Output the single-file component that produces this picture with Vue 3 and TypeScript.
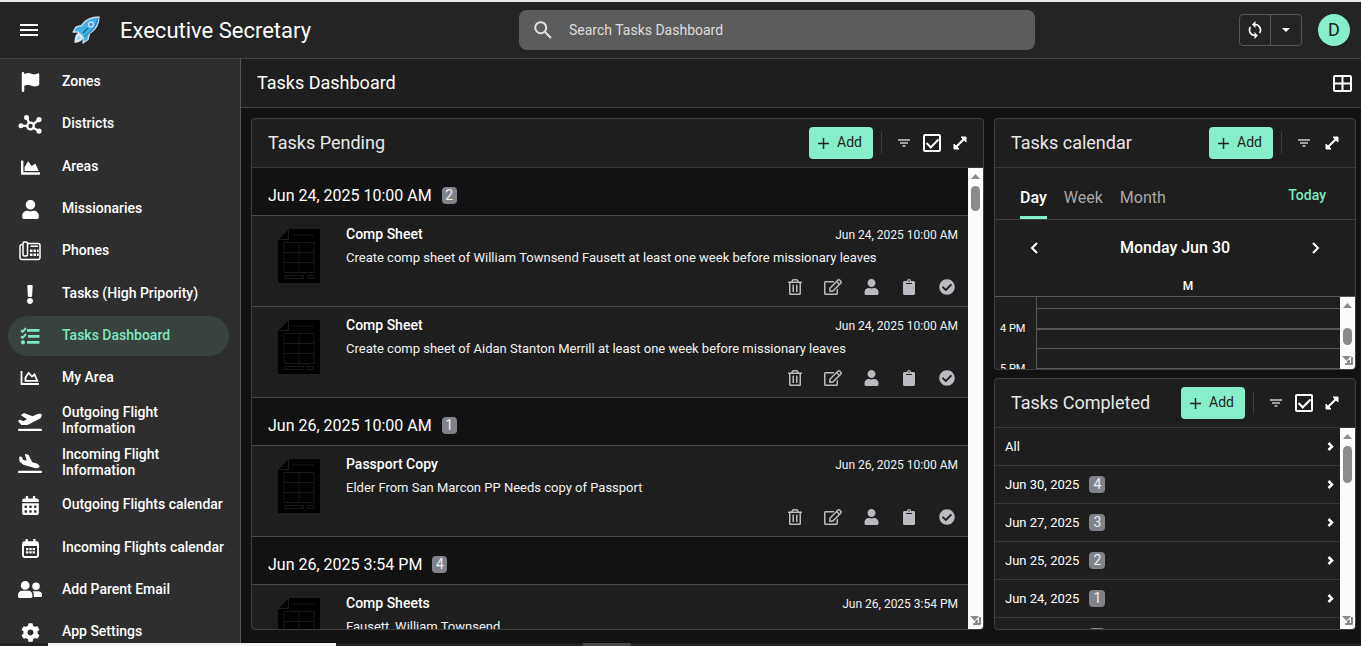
<script setup lang="ts">
import { ref } from 'vue'

interface Glyph {
  box: string
  w: number
  h: number
  fill?: string
  line?: string
  lineWidth?: number
}

const glyphs: Record<string, Glyph> = {
  flag: { box: '0 0 448 512', w: 19, h: 20, fill: 'M64 32C64 14.3 49.7 0 32 0S0 14.3 0 32V64 368 480c0 17.7 14.3 32 32 32s32-14.3 32-32V352l64.3-16.1c41.1-10.3 84.6-5.5 122.5 13.4c44.2 22.1 95.5 24.8 141.7 7.4l34.7-13c12.5-4.7 20.8-16.6 20.8-30V66.1c0-23-24.2-38-44.8-27.7l-9.6 4.8c-46.3 23.2-100.8 23.2-147.1 0c-35.1-17.6-75.4-22-113.5-12.5L64 48V32z' },
  network: { box: '0 0 24 20', w: 24, h: 20, fill: 'M3 9.300a2.500 2.500 0 1 0 0 5 2.500 2.500 0 0 0 0-5zM8.500 1a2.500 2.500 0 1 0 0 5 2.500 2.500 0 0 0 0-5zM21 3a2.600 2.600 0 1 0 0 5.200A2.600 2.600 0 0 0 21 3zM21 14.500a2.600 2.600 0 1 0 0 5.200 2.600 2.600 0 0 0 0-5.200z', line: 'M3 11.800H9M8.500 3.500L11 8.500M21 5.600L15.500 10M21 17L15.500 14M12.500 8.700a3.300 3.300 0 1 0 0 6.600 3.300 3.300 0 0 0 0-6.600z', lineWidth: 2.3 },
  area: { box: '0 0 512 512', w: 19, h: 19, fill: 'M500 384c6.600 0 12 5.400 12 12v40c0 6.600-5.400 12-12 12H12c-6.600 0-12-5.400-12-12V76c0-6.600 5.400-12 12-12h40c6.600 0 12 5.400 12 12v308h436zM372.700 159.500L288 216l-85.300-113.700c-5.100-6.800-15.500-6.300-19.900 1L96 248v104h384l-89.900-187.800c-3.200-6.500-11.400-8.700-17.400-4.700z' },
  user: { box: '0 0 448 512', w: 17, h: 19, fill: 'M224 256c70.700 0 128-57.300 128-128S294.700 0 224 0 96 57.300 96 128s57.300 128 128 128zm89.600 32h-16.700c-22.200 10.200-46.900 16-72.900 16s-50.600-5.800-72.900-16h-16.700C60.200 288 0 348.200 0 422.400V464c0 26.500 21.500 48 48 48h352c26.500 0 48-21.500 48-48v-41.600c0-74.200-60.200-134.400-134.400-134.400z' },
  phone: { box: '0 0 22 20', w: 22, h: 20, fill: 'M11 8.500h2.500V11H11zM14.500 8.500H17V11h-2.500zM18 8.500h1.700V11H18zM11 12.500h2.500V15H11zM14.500 12.500H17V15h-2.500zM18 12.500h1.700V15H18z', line: 'M8.500 2.500H19a2 2 0 0 1 2 2v12a2 2 0 0 1-2 2H3a2 2 0 0 1-2-2V5.500a2 2 0 0 1 2-2M5.500 1H7a1.500 1.500 0 0 1 1.500 1.500v11A1.500 1.500 0 0 1 7 15H5.500A1.500 1.500 0 0 1 4 13.500v-11A1.500 1.500 0 0 1 5.500 1zM11.500 5.300h7.500', lineWidth: 1.5 },
  alert: { box: '0 0 192 512', w: 8, h: 19, fill: 'M176 432c0 44.112-35.888 80-80 80s-80-35.888-80-80 35.888-80 80-80 80 35.888 80 80zM25.260 25.199l13.600 272C39.499 309.972 50.041 320 62.830 320h66.340c12.789 0 23.331-10.028 23.970-22.801l13.600-272C167.425 11.490 156.496 0 142.770 0H49.230C35.504 0 24.575 11.490 25.260 25.199z' },
  tasks: { box: '0 0 20 18', w: 20, h: 18, fill: 'M7 2h12.500v2.800H7zM8 8h11.500v2.800H8zM7 14h12.500v2.800H7zM3 13.200a2.100 2.100 0 1 0 0 4.200 2.100 2.100 0 0 0 0-4.200z', line: 'M1 3.300l1.600 1.600L6 1M1 9.300l1.600 1.600L6 7', lineWidth: 2 },
  areaLine: { box: '0 0 20 16', w: 20, h: 16, line: 'M1.500 1v13H19M5.500 10.800V7.500L8.500 3l3.500 3.500L14.500 4.500l2.800 6.300z', lineWidth: 1.8 },
  departure: { box: '0 0 640 512', w: 24, h: 19, fill: 'M624 448H16c-8.840 0-16 7.160-16 16v32c0 8.840 7.160 16 16 16h608c8.840 0 16-7.160 16-16v-32c0-8.840-7.160-16-16-16zM80.550 341.270c6.280 6.840 15.100 10.720 24.330 10.710l130.540-.180a65.620 65.620 0 0 0 29.640-7.120l290.960-147.650c26.740-13.570 50.710-32.940 67.020-58.310 18.310-28.480 20.300-49.090 13.070-63.650-7.210-14.570-24.740-25.270-58.250-27.450-29.850-1.940-59.540 5.920-86.280 19.480l-98.510 49.990-218.700-82.060a17.799 17.799 0 0 0-18-1.110L90.620 67.290c-10.670 5.410-13.250 19.650-5.170 28.530l156.220 98.100-103.210 52.380-72.350-36.470a17.804 17.804 0 0 0-16.070.020L9.910 230.220c-10.440 5.300-13.190 19.120-5.570 28.080l76.210 82.970z' },
  arrival: { box: '0 0 640 512', w: 24, h: 19, fill: 'M624 448H16c-8.840 0-16 7.160-16 16v32c0 8.840 7.160 16 16 16h608c8.840 0 16-7.160 16-16v-32c0-8.840-7.160-16-16-16zM44.810 205.660l88.740 80a62.607 62.607 0 0 0 25.470 13.930l287.600 78.350c26.480 7.210 54.560 8.720 81 1.360 29.670-8.270 43.440-21.210 47.250-35.710 3.830-14.500-1.730-32.710-23.370-54.960-19.280-19.820-44.350-32.790-70.830-40l-97.510-26.560L282.800 30.220c-1.510-5.810-5.950-10.350-11.660-11.910L206.050.580c-10.560-2.880-20.900 5.320-20.710 16.440l47.920 164.210-102.200-27.840-27.590-67.880c-1.930-4.890-6.010-8.570-11.020-9.930L52.720 64.750c-10.340-2.820-20.530 5-20.720 15.880l.230 101.780c.190 8.910 6.030 17.340 12.580 23.250z' },
  calendar: { box: '0 0 448 512', w: 17, h: 19, fill: 'M0 464c0 26.500 21.500 48 48 48h352c26.500 0 48-21.500 48-48V192H0v272zm320-196c0-6.600 5.400-12 12-12h40c6.600 0 12 5.400 12 12v40c0 6.600-5.400 12-12 12h-40c-6.600 0-12-5.400-12-12v-40zm0 128c0-6.600 5.400-12 12-12h40c6.600 0 12 5.400 12 12v40c0 6.600-5.400 12-12 12h-40c-6.600 0-12-5.400-12-12v-40zM192 268c0-6.600 5.400-12 12-12h40c6.600 0 12 5.400 12 12v40c0 6.600-5.400 12-12 12h-40c-6.600 0-12-5.400-12-12v-40zm0 128c0-6.600 5.400-12 12-12h40c6.600 0 12 5.400 12 12v40c0 6.600-5.400 12-12 12h-40c-6.600 0-12-5.400-12-12v-40zM64 268c0-6.600 5.400-12 12-12h40c6.600 0 12 5.400 12 12v40c0 6.600-5.400 12-12 12H76c-6.600 0-12-5.400-12-12v-40zm0 128c0-6.600 5.400-12 12-12h40c6.600 0 12 5.400 12 12v40c0 6.600-5.400 12-12 12H76c-6.600 0-12-5.400-12-12v-40zM400 64h-48V16c0-8.800-7.200-16-16-16h-32c-8.800 0-16 7.200-16 16v48H160V16c0-8.800-7.200-16-16-16h-32c-8.800 0-16 7.200-16 16v48H48C21.500 64 0 85.500 0 112v48h448v-48c0-26.500-21.500-48-48-48z' },
  calendarLine: { box: '0 0 17 19', w: 17, h: 19, fill: 'M3.500 0h2.300v3H3.500zM11.200 0h2.300v3h-2.300zM1 2.500h15V7H1zM4 9h2.400v2.200H4zM7.300 9h2.400v2.200H7.300zM10.600 9H13v2.200h-2.400zM4 12.200h2.400v2.200H4zM7.300 12.200h2.400v2.200H7.300zM10.600 12.200H13v2.200h-2.400z', line: 'M2.500 3.500h12a1.500 1.500 0 0 1 1.500 1.500v11.500a1.500 1.500 0 0 1-1.500 1.500h-12A1.500 1.500 0 0 1 1 16.500V5a1.500 1.500 0 0 1 1.500-1.500z', lineWidth: 1.9 },
  users: { box: '0 0 24 18', w: 24, h: 18, fill: 'M7.200 0a4.400 4.400 0 1 0 0 8.800 4.400 4.400 0 0 0 0-8.800zM4 9.800h6.400c2.400 0 4 1.800 4 4v1.800c0 .9-.6 1.400-1.400 1.400H1.400C.6 17 0 16.500 0 15.600v-1.800c0-2.200 1.600-4 4-4zM18 1.500a3.800 3.800 0 1 0 0 7.600 3.800 3.800 0 0 0 0-7.600zM15 10.200h5.500c2 0 3.500 1.500 3.500 3.300v1.200c0 .8-.6 1.300-1.300 1.300h-6.900v-2.200c0-1.500-.4-2.600-1.300-3.500z' },
  gear: { box: '0 0 512 512', w: 19, h: 19, fill: 'M487.400 315.700l-42.600-24.600c4.300-23.200 4.300-47 0-70.200l42.600-24.600c4.900-2.800 7.100-8.600 5.500-14-11.100-35.600-30-67.800-54.700-94.600-3.800-4.100-10-5.100-14.800-2.300L380.800 110c-17.900-15.400-38.500-27.300-60.800-35.100V25.800c0-5.600-3.900-10.500-9.400-11.700-36.700-8.200-74.300-7.800-109.200 0-5.500 1.200-9.400 6.100-9.400 11.700V75c-22.200 7.900-42.800 19.800-60.800 35.100L88.700 85.500c-4.900-2.800-11-1.900-14.800 2.300-24.700 26.700-43.600 58.900-54.700 94.600-1.700 5.400.6 11.200 5.500 14L67.300 221c-4.300 23.200-4.300 47 0 70.200l-42.600 24.600c-4.900 2.800-7.100 8.600-5.500 14 11.100 35.600 30 67.800 54.700 94.600 3.800 4.100 10 5.100 14.800 2.300l42.600-24.600c17.900 15.400 38.500 27.300 60.800 35.100v49.200c0 5.600 3.900 10.500 9.400 11.700 36.700 8.200 74.300 7.800 109.200 0 5.500-1.200 9.400-6.100 9.400-11.700v-49.200c22.200-7.900 42.800-19.800 60.800-35.100l42.600 24.600c4.900 2.800 11 1.900 14.800-2.300 24.700-26.700 43.600-58.900 54.700-94.600 1.500-5.500-.7-11.300-5.600-14.100zM256 336c-44.100 0-80-35.900-80-80s35.900-80 80-80 80 35.900 80 80-35.900 80-80 80z' },
  trash: { box: '0 0 448 512', w: 14, h: 16, fill: 'M268 416h24a12 12 0 0 0 12-12V188a12 12 0 0 0-12-12h-24a12 12 0 0 0-12 12v216a12 12 0 0 0 12 12zM432 80h-82.410l-34-56.700A48 48 0 0 0 274.410 0H173.590a48 48 0 0 0-41.160 23.300L98.410 80H16A16 16 0 0 0 0 96v16a16 16 0 0 0 16 16h16v336a48 48 0 0 0 48 48h288a48 48 0 0 0 48-48V128h16a16 16 0 0 0 16-16V96a16 16 0 0 0-16-16zM171.840 50.910A6 6 0 0 1 177 48h94a6 6 0 0 1 5.150 2.910L293.610 80H154.390zM368 464H80V128h288zm-212-48h24a12 12 0 0 0 12-12V188a12 12 0 0 0-12-12h-24a12 12 0 0 0-12 12v216a12 12 0 0 0 12 12z' },
  edit: { box: '0 0 576 512', w: 18, h: 16, fill: 'M402.300 344.900l32-32c5-5 13.700-1.500 13.700 5.700V464c0 26.500-21.500 48-48 48H48c-26.500 0-48-21.500-48-48V112c0-26.500 21.500-48 48-48h273.500c7.100 0 10.700 8.600 5.700 13.700l-32 32c-1.500 1.500-3.500 2.300-5.700 2.300H48v352h352V350.500c0-2.100.8-4.100 2.300-5.600zm156.600-201.800L296.300 405.700l-90.400 10c-26.200 2.900-48.500-19.200-45.600-45.600l10-90.400L432.900 17.100c22.900-22.900 59.900-22.900 82.700 0l43.200 43.200c22.900 22.900 22.900 60 .1 82.800zM460.100 174L402 115.900 216.200 301.800l-7.300 65.300 65.300-7.300L460.100 174zm64.800-79.700l-43.200-43.200c-4.100-4.100-10.800-4.100-14.800 0L436 82l58.100 58.100 30.900-30.900c4-4.200 4-10.800-.1-14.900z' },
  person: { box: '0 0 448 512', w: 15, h: 16, fill: 'M224 256c70.700 0 128-57.300 128-128S294.700 0 224 0 96 57.300 96 128s57.300 128 128 128zm89.600 32h-16.700c-22.200 10.200-46.900 16-72.900 16s-50.600-5.800-72.900-16h-16.700C60.200 288 0 348.200 0 422.400V464c0 26.500 21.500 48 48 48h352c26.500 0 48-21.500 48-48v-41.600c0-74.200-60.200-134.400-134.400-134.400z' },
  clipboard: { box: '0 0 384 512', w: 12, h: 16, fill: 'M384 112v352c0 26.510-21.490 48-48 48H48c-26.510 0-48-21.490-48-48V112c0-26.510 21.490-48 48-48h80c0-35.290 28.710-64 64-64s64 28.710 64 64h80c26.510 0 48 21.490 48 48zM192 40c-13.255 0-24 10.745-24 24s10.745 24 24 24 24-10.745 24-24-10.745-24-24-24m96 114v-20a6 6 0 0 0-6-6H102a6 6 0 0 0-6 6v20a6 6 0 0 0 6 6h180a6 6 0 0 0 6-6z' },
  done: { box: '0 0 512 512', w: 16, h: 16, fill: 'M504 256c0 136.967-111.033 248-248 248S8 392.967 8 256 119.033 8 256 8s248 111.033 248 248zM227.314 387.314l184-184c6.248-6.248 6.248-16.379 0-22.627l-22.627-22.627c-6.248-6.249-16.379-6.249-22.628 0L216 308.118l-70.059-70.059c-6.248-6.248-16.379-6.248-22.628 0l-22.627 22.627c-6.248 6.248-6.248 16.379 0 22.627l104 104c6.249 6.249 16.379 6.249 22.628.001z' },
}

const nav = [
  { label: 'Zones', icon: 'flag' },
  { label: 'Districts', icon: 'network' },
  { label: 'Areas', icon: 'area' },
  { label: 'Missionaries', icon: 'user' },
  { label: 'Phones', icon: 'phone' },
  { label: 'Tasks (High Pripority)', icon: 'alert' },
  { label: 'Tasks Dashboard', icon: 'tasks' },
  { label: 'My Area', icon: 'areaLine' },
  { label: 'Outgoing Flight Information', icon: 'departure' },
  { label: 'Incoming Flight Information', icon: 'arrival' },
  { label: 'Outgoing Flights calendar', icon: 'calendar' },
  { label: 'Incoming Flights calendar', icon: 'calendarLine' },
  { label: 'Add Parent Email', icon: 'users' },
  { label: 'App Settings', icon: 'gear' },
]
const current = ref('Tasks Dashboard')

const groups = [
  {
    date: 'Jun 24, 2025 10:00 AM',
    count: 2,
    tasks: [
      { title: 'Comp Sheet', text: 'Create comp sheet of William Townsend Fausett at least one week before missionary leaves' },
      { title: 'Comp Sheet', text: 'Create comp sheet of Aidan Stanton Merrill at least one week before missionary leaves' },
    ],
  },
  {
    date: 'Jun 26, 2025 10:00 AM',
    count: 1,
    tasks: [{ title: 'Passport Copy', text: 'Elder From San Marcon PP Needs copy of Passport' }],
  },
  {
    date: 'Jun 26, 2025 3:54 PM',
    count: 4,
    tasks: [{ title: 'Comp Sheets', text: 'Fausett, William Townsend' }],
  },
]

const actions = [
  { icon: 'trash', label: 'Delete' },
  { icon: 'edit', label: 'Edit' },
  { icon: 'person', label: 'Assign' },
  { icon: 'clipboard', label: 'Copy' },
  { icon: 'done', label: 'Complete' },
]

const completed = [
  { label: 'All', count: 0 },
  { label: 'Jun 30, 2025', count: 4 },
  { label: 'Jun 27, 2025', count: 3 },
  { label: 'Jun 25, 2025', count: 2 },
  { label: 'Jun 24, 2025', count: 1 },
  { label: 'Jun 23, 2025', count: 5 },
]

const views = ['Day', 'Week', 'Month']
const view = ref('Day')
const search = ref('')
const selectPending = ref(true)
const selectCompleted = ref(true)
</script>

<template>
  <div class="app">
    <div class="window-edge"></div>
    <header class="topbar">
      <div class="brand">
        <button class="icon-btn menu" type="button" aria-label="Menu"><span></span><span></span><span></span></button>
        <svg class="rocket" viewBox="0 0 28 28" aria-hidden="true">
          <path d="M27 1C19 1 13 4 9.500 9.500L4 11 1 16l5 0 5.500 5.500L11 27l5-3.500 1.500-6C23 14 27 8 27 1z" fill="#3fb1e5" stroke="#c9d7e6" stroke-width="1.400" stroke-linejoin="round" />
          <path d="M6.500 16.500l5 5c-1 3-4 5-9 5.500C2.500 22 3.500 18 6.500 16.500z" fill="#dceaf5" />
          <path d="M6.500 19.500l2.500 2.500c-1 1.500-2.500 2-4 2 0-1.500.5-3.500 1.500-4.500z" fill="#8fd0f0" />
          <path d="M26 2c-2 9-6 14-14.500 19" fill="none" stroke="#2585bd" stroke-width="1.200" />
          <path d="M11 17l5-5" stroke="#1f5d92" stroke-width="1.400" />
          <circle cx="19" cy="8.500" r="2.400" fill="#5b86c9" stroke="#d4e8f8" stroke-width="1.200" />
        </svg>
        <h1>Executive Secretary</h1>
      </div>
      <label class="search">
        <svg viewBox="0 0 18 18" aria-hidden="true"><circle cx="6.700" cy="6.700" r="5.500" /><path d="M10.800 10.800L17 17" /></svg>
        <input v-model="search" type="text" placeholder="Search Tasks Dashboard" aria-label="Search Tasks Dashboard" />
      </label>
      <div class="tools">
        <div class="split">
          <button type="button" aria-label="Sync">
            <svg width="14" height="18" viewBox="0 0 14 18" aria-hidden="true">
              <path d="M7 3.500a5.500 5.500 0 0 1 4.600 8.500M7 14.500A5.500 5.500 0 0 1 2.400 6" fill="none" stroke="#fff" stroke-width="1.700" />
              <path d="M7.500 0v7L4 3.500zM6.500 18v-7l3.500 3.500z" fill="#fff" />
            </svg>
          </button>
          <button type="button" aria-label="Sync options">
            <svg width="8" height="4" viewBox="0 0 8 4" aria-hidden="true"><path d="M0 0h8L4 4z" fill="#fff" /></svg>
          </button>
        </div>
        <button class="avatar" type="button">D</button>
      </div>
    </header>

    <div class="body">
      <nav class="sidebar" aria-label="Main">
        <ul>
          <li v-for="item in nav" :key="item.label">
            <a href="#" :class="{ active: item.label === current }" @click.prevent="current = item.label">
              <span class="nav-icon">
                <svg :viewBox="glyphs[item.icon].box" :width="glyphs[item.icon].w" :height="glyphs[item.icon].h" aria-hidden="true">
                  <path v-if="glyphs[item.icon].fill" :d="glyphs[item.icon].fill" fill="currentColor" />
                  <path v-if="glyphs[item.icon].line" :d="glyphs[item.icon].line" fill="none" stroke="currentColor" :stroke-width="glyphs[item.icon].lineWidth" />
                </svg>
              </span>
              <span class="nav-label">{{ item.label }}</span>
            </a>
          </li>
        </ul>
      </nav>

      <main>
        <div class="page-head">
          <h2>Tasks Dashboard</h2>
          <button class="icon-btn" type="button" aria-label="Layout">
            <svg width="19" height="17" viewBox="0 0 19 17" aria-hidden="true">
              <rect x="1" y="1" width="17" height="15" rx="1" fill="none" stroke="#fff" stroke-width="2" />
              <path d="M9.500 1v15M1 8.500h17" stroke="#fff" stroke-width="2" />
            </svg>
          </button>
        </div>

        <div class="board">
          <section class="panel pending">
            <div class="panel-head">
              <h3>Tasks Pending</h3>
              <button class="add" type="button"><svg width="11" height="11" viewBox="0 0 11 11" aria-hidden="true"><path d="M5.500 0v11M0 5.500h11" /></svg><span>Add</span></button>
              <span class="rule"></span>
              <button class="icon-btn tool" type="button" aria-label="Filter"><svg width="12" height="8" viewBox="0 0 12 8" aria-hidden="true"><path d="M0 1h12M2 4h8M4.500 7h3" stroke="#ccc" stroke-width="1.300" /></svg></button>
              <span class="tool"><input v-model="selectPending" type="checkbox" aria-label="Select pending tasks" /></span>
              <button class="icon-btn tool" type="button" aria-label="Expand"><svg width="14" height="14" viewBox="0 0 14 14" aria-hidden="true"><path d="M3 11l8-8" stroke="#fff" stroke-width="2.200" /><path d="M8 1h5v5zM1 8v5h5z" fill="#fff" stroke="#fff" stroke-linejoin="round" /></svg></button>
            </div>
            <div class="panel-body">
              <div class="content">
                <template v-for="group in groups" :key="group.date">
                  <div class="group-head">{{ group.date }}<span class="badge small">{{ group.count }}</span></div>
                  <article v-for="task in group.tasks" :key="task.text" class="task">
                    <svg class="sheet" viewBox="0 0 42 54" aria-hidden="true">
                      <path d="M11 0h31v54H0V11h11z" fill="#000" />
                      <path d="M10 1v9H1z" fill="#000" />
                      <path d="M15 6h21M6 13.500h30v30H6zM6 23.500h30M6 33.500h30M21 13.500v30M6.500 46.500h19v3h-19zM29.500 46.500h6v3h-6z" fill="none" stroke="#191919" />
                    </svg>
                    <div class="task-main">
                      <div class="task-top"><h4>{{ task.title }}</h4><time>{{ group.date }}</time></div>
                      <p>{{ task.text }}</p>
                      <div class="actions">
                        <button v-for="a in actions" :key="a.icon" class="icon-btn" type="button" :aria-label="a.label">
                          <svg :viewBox="glyphs[a.icon].box" :width="glyphs[a.icon].w" :height="glyphs[a.icon].h" aria-hidden="true"><path :d="glyphs[a.icon].fill" fill="currentColor" /></svg>
                        </button>
                      </div>
                    </div>
                  </article>
                </template>
              </div>
              <div class="scroll" aria-hidden="true">
                <svg class="up" viewBox="0 0 9 5"><path d="M4.500 0L9 5H0z" /></svg>
                <span class="thumb thumb-pending"></span>
                <svg class="corner" viewBox="0 0 11 9"><path d="M0 0h9L4.500 5z" /><path d="M10 1v7H3M7 4v2H5" /></svg>
              </div>
            </div>
          </section>

          <div class="side">
            <section class="panel">
              <div class="panel-head">
                <h3>Tasks calendar</h3>
                <button class="add" type="button"><svg width="11" height="11" viewBox="0 0 11 11" aria-hidden="true"><path d="M5.500 0v11M0 5.500h11" /></svg><span>Add</span></button>
                <span class="rule"></span>
                <button class="icon-btn tool" type="button" aria-label="Filter"><svg width="12" height="8" viewBox="0 0 12 8" aria-hidden="true"><path d="M0 1h12M2 4h8M4.500 7h3" stroke="#ccc" stroke-width="1.300" /></svg></button>
                <button class="icon-btn tool" type="button" aria-label="Expand"><svg width="14" height="14" viewBox="0 0 14 14" aria-hidden="true"><path d="M3 11l8-8" stroke="#fff" stroke-width="2.200" /><path d="M8 1h5v5zM1 8v5h5z" fill="#fff" stroke="#fff" stroke-linejoin="round" /></svg></button>
              </div>
              <div class="views">
                <button v-for="v in views" :key="v" type="button" class="view" :class="{ on: v === view }" @click="view = v">{{ v }}</button>
                <button type="button" class="today">Today</button>
              </div>
              <div class="day-nav">
                <button class="icon-btn" type="button" aria-label="Previous day"><svg width="8" height="12" viewBox="0 0 8 12" aria-hidden="true"><path d="M7 1L2 6l5 5" /></svg></button>
                <strong>Monday Jun 30</strong>
                <button class="icon-btn" type="button" aria-label="Next day"><svg width="8" height="12" viewBox="0 0 8 12" aria-hidden="true"><path d="M1 1l5 5-5 5" /></svg></button>
              </div>
              <div class="weekday">M</div>
              <div class="panel-body hours">
                <div class="times"><span>4 PM</span><span>5 PM</span></div>
                <div class="slots"><div class="slot first"></div><div class="slot hour"></div><div class="slot half"></div><div class="slot last"></div></div>
                <div class="scroll" aria-hidden="true">
                  <svg class="up" viewBox="0 0 9 5"><path d="M4.500 0L9 5H0z" /></svg>
                  <span class="thumb thumb-hours"></span>
                  <svg class="corner" viewBox="0 0 11 9"><path d="M0 0h9L4.500 5z" /><path d="M10 1v7H3M7 4v2H5" /></svg>
                </div>
              </div>
            </section>

            <section class="panel">
              <div class="panel-head">
                <h3>Tasks Completed</h3>
                <button class="add" type="button"><svg width="11" height="11" viewBox="0 0 11 11" aria-hidden="true"><path d="M5.500 0v11M0 5.500h11" /></svg><span>Add</span></button>
                <span class="rule"></span>
                <button class="icon-btn tool" type="button" aria-label="Filter"><svg width="12" height="8" viewBox="0 0 12 8" aria-hidden="true"><path d="M0 1h12M2 4h8M4.500 7h3" stroke="#ccc" stroke-width="1.300" /></svg></button>
                <span class="tool"><input v-model="selectCompleted" type="checkbox" aria-label="Select completed tasks" /></span>
                <button class="icon-btn tool" type="button" aria-label="Expand"><svg width="14" height="14" viewBox="0 0 14 14" aria-hidden="true"><path d="M3 11l8-8" stroke="#fff" stroke-width="2.200" /><path d="M8 1h5v5zM1 8v5h5z" fill="#fff" stroke="#fff" stroke-linejoin="round" /></svg></button>
              </div>
              <div class="panel-body">
                <div class="content">
                  <a v-for="row in completed" :key="row.label" class="date-row" href="#" @click.prevent>
                    {{ row.label }}<span v-if="row.count" class="badge">{{ row.count }}</span>
                    <svg width="7" height="9" viewBox="0 0 7 9" aria-hidden="true"><path d="M1.500 1L5 4.500 1.500 8" /></svg>
                  </a>
                </div>
                <div class="scroll" aria-hidden="true">
                  <svg class="up" viewBox="0 0 9 5"><path d="M4.500 0L9 5H0z" /></svg>
                  <span class="thumb thumb-done"></span>
                  <svg class="corner" viewBox="0 0 11 9"><path d="M0 0h9L4.500 5z" /><path d="M10 1v7H3M7 4v2H5" /></svg>
                </div>
              </div>
            </section>
          </div>
        </div>
      </main>
    </div>
    <div class="desktop-edge"><span></span><i></i></div>
  </div>
</template>

<style>
body {
  margin: 0;
  background: #121212;
}
</style>

<style scoped>
* {
  box-sizing: border-box;
}
.app {
  display: flex;
  flex-direction: column;
  height: 100vh;
  overflow: hidden;
  background: #121212;
  color: #fff;
  font: 14px/16px Roboto, "Liberation Sans", sans-serif;
}
h1, h2, h3, h4, p, ul {
  margin: 0;
  padding: 0;
  font-weight: 400;
}
button {
  padding: 0;
  border: 0;
  background: none;
  color: inherit;
  font: inherit;
  cursor: pointer;
}
a {
  color: inherit;
  text-decoration: none;
}
.icon-btn {
  display: flex;
  align-items: center;
  justify-content: center;
}
.window-edge {
  flex: none;
  height: 2px;
  background: #e7eaed;
}
.topbar {
  flex: none;
  display: grid;
  grid-template-columns: 519fr 516fr 326fr;
  align-items: center;
  height: 57px;
  background: #242424;
  border-bottom: 1px solid #424242;
}
.brand {
  display: flex;
  align-items: center;
  padding-left: 20px;
}
.menu {
  flex-direction: column;
  gap: 3px;
  width: 18px;
}
.menu span {
  width: 18px;
  height: 2px;
  background: #fff;
}
.rocket {
  width: 28px;
  height: 28px;
  margin: 0 20px 0 34px;
}
h1 {
  padding-top: 2px;
  font-size: 22px;
  line-height: 28px;
}
.search {
  display: flex;
  align-items: center;
  gap: 17px;
  height: 40px;
  padding: 0 15px;
  border-radius: 8px;
  background: #5c5c5c;
}
.search svg {
  flex: none;
  width: 18px;
  height: 18px;
  fill: none;
  stroke: #e2e2e2;
  stroke-width: 2;
}
.search input {
  flex: 1;
  min-width: 0;
  padding: 0;
  border: 0;
  outline: 0;
  background: none;
  color: #fff;
  font: inherit;
}
.search input::placeholder {
  color: #dcdcdc;
  opacity: 1;
}
.tools {
  display: flex;
  justify-content: flex-end;
  gap: 16px;
  padding-right: 11px;
}
.split {
  display: flex;
  width: 63px;
  height: 32px;
  border: 1px solid #565656;
  border-radius: 4px;
}
.split button {
  flex: 1;
  display: flex;
  align-items: center;
  justify-content: center;
}
.split button + button {
  border-left: 1px solid #565656;
}
.avatar {
  width: 32px;
  height: 32px;
  border-radius: 50%;
  background: #86eec8;
  color: #222;
  font-size: 18px;
}
.body {
  flex: 1;
  display: flex;
  min-height: 0;
}
.sidebar {
  flex: none;
  width: 241px;
  overflow: hidden;
  padding: 3px 11px 0 8px;
  background: #2e2e2e;
  border-right: 1px solid #565656;
}
.sidebar ul {
  list-style: none;
}
.sidebar li {
  margin-bottom: 2px;
}
.sidebar li:nth-child(3n + 2) {
  margin-bottom: 3px;
}
.sidebar a {
  display: flex;
  align-items: center;
  gap: 20px;
  height: 40px;
  padding-left: 10px;
  border-radius: 20px;
  font-weight: 500;
  line-height: 16px;
}
.sidebar a.active {
  background: #38423e;
  color: #7fe8c0;
}
.nav-icon {
  flex: none;
  display: flex;
  justify-content: center;
  width: 24px;
}
.nav-label {
  max-width: 164px;
  padding-bottom: 2px;
}
main {
  flex: 1;
  display: flex;
  flex-direction: column;
  min-width: 0;
}
.page-head {
  flex: none;
  display: flex;
  align-items: center;
  justify-content: space-between;
  height: 49px;
  padding: 0 9px 0 16px;
  background: #1e1e1e;
  border-bottom: 1px solid #404040;
}
h2, h3 {
  font-size: 18px;
  line-height: 24px;
}
.board {
  flex: 1;
  display: grid;
  grid-template-columns: minmax(0, 733fr) minmax(0, 362fr);
  grid-template-rows: minmax(0, 1fr);
  gap: 10px;
  min-height: 0;
  padding: 10px 5px 13px 10px;
}
.side {
  display: grid;
  grid-template-rows: repeat(2, minmax(0, 1fr));
  gap: 8px;
  min-height: 0;
}
.panel {
  display: flex;
  flex-direction: column;
  min-height: 0;
  overflow: hidden;
  border: 1px solid #404040;
  border-radius: 4px;
  background: #1e1e1e;
}
.panel-head {
  flex: none;
  display: flex;
  align-items: center;
  height: 49px;
  padding: 0 9px 0 16px;
  border-bottom: 1px solid #383838;
}
h3 {
  flex: 1;
  color: #e8e8e8;
}
.add {
  display: flex;
  align-items: center;
  gap: 8px;
  width: 64px;
  height: 32px;
  padding-left: 9px;
  border-radius: 4px;
  background: #86eec8;
  color: #222;
}
.add span {
  padding-bottom: 2px;
}
.add svg {
  stroke: #222;
  stroke-width: 1.500;
}
.rule {
  width: 1px;
  height: 22px;
  margin: 0 8px;
  background: #3c3c3c;
}
.tool {
  display: flex;
  align-items: center;
  justify-content: center;
  width: 28px;
  height: 28px;
}
.tool input {
  appearance: none;
  display: flex;
  justify-content: center;
  width: 18px;
  height: 18px;
  margin: 0;
  border: 2px solid #fff;
  border-radius: 2px;
}
.tool input:checked::after {
  content: "";
  width: 5px;
  height: 10px;
  border: solid #fff;
  border-width: 0 2px 2px 0;
  transform: rotate(45deg);
}
.panel-body {
  flex: 1;
  display: flex;
  min-height: 0;
  overflow: hidden;
}
.content {
  flex: 1;
  min-width: 0;
  overflow: hidden;
}
.group-head {
  display: flex;
  align-items: center;
  gap: 10px;
  height: 48px;
  padding: 8px 16px 0;
  border-bottom: 1px solid #484848;
  background: #121212;
  font-size: 16px;
}
.badge {
  width: 16px;
  height: 17px;
  border-radius: 4px;
  background: #80848a;
  color: #eee;
  font-size: 14px;
  line-height: 17px;
  text-align: center;
}
.badge.small {
  width: 15px;
}
.task {
  display: flex;
  gap: 26px;
  height: 91px;
  padding: 10px 10px 0 26px;
  border-bottom: 1px solid #484848;
}
.sheet {
  flex: none;
  width: 42px;
  height: 54px;
  margin-top: 3px;
}
.task-main {
  flex: 1;
  min-width: 0;
}
.task-top {
  display: flex;
  justify-content: space-between;
}
h4 {
  font-size: 14px;
  font-weight: 500;
}
time {
  padding-top: 1px;
  font-size: 12px;
  color: #f2f2f2;
}
.task p {
  margin-top: 7px;
  font-size: 13px;
  color: #f2f2f2;
}
.actions {
  display: flex;
  justify-content: flex-end;
  gap: 14px;
  padding-top: 9px;
  margin-right: -1px;
  color: #b9bbc0;
}
.actions button {
  width: 24px;
  height: 24px;
}
.scroll {
  flex: none;
  display: flex;
  flex-direction: column;
  align-items: center;
  width: 15px;
  padding: 6px 0 4px;
  background: #fcfcfc;
}
.scroll svg {
  flex: none;
  fill: #8b8b8b;
}
.up {
  width: 9px;
  height: 5px;
}
.corner {
  width: 11px;
  height: 9px;
  margin-top: auto;
}
.corner path + path {
  fill: none;
  stroke: #666;
  stroke-width: 1.500;
}
.thumb {
  width: 9px;
  min-height: 17px;
  border-radius: 5px;
  background: #8b8b8b;
}
.thumb-pending {
  height: 25px;
  margin-top: 7px;
}
.thumb-done {
  height: 37px;
  margin-top: 7px;
}
.thumb-hours {
  height: 17px;
  margin-top: 20px;
}
.views {
  flex: none;
  display: flex;
  gap: 17px;
  height: 52px;
  padding: 0 29px 0 25px;
  border-bottom: 1px solid #404040;
}
.view {
  padding-top: 11px;
  border-bottom: 3px solid transparent;
  color: #a8a8a8;
  font-size: 16px;
}
.view.on {
  border-color: #86eec8;
  color: #fff;
  font-weight: 500;
}
.today {
  margin: 0 0 0 auto;
  padding-top: 2px;
  color: #7fe8c0;
  font-weight: 500;
}
.day-nav {
  flex: none;
  display: flex;
  align-items: center;
  justify-content: space-between;
  height: 56px;
  padding: 0 35px;
}
.day-nav svg,
.date-row svg {
  fill: none;
  stroke: #fff;
  stroke-width: 2;
}
.day-nav strong {
  font-size: 16px;
  font-weight: 500;
}
.weekday {
  flex: none;
  height: 21px;
  padding-left: 26px;
  border-bottom: 1px solid #55585c;
  font-size: 12px;
  font-weight: 500;
  line-height: 20px;
  text-align: center;
}
.times {
  flex: none;
  display: flex;
  flex-direction: column;
  gap: 20px;
  width: 42px;
  padding-top: 22px;
  border-right: 1px solid #55585c;
  font-size: 11px;
}
.times span {
  flex: none;
  height: 20px;
  padding-left: 5px;
  line-height: 20px;
}
.slots {
  flex: 1;
}
.slot {
  border-bottom: 1px solid #55585c;
}
.first {
  height: 12px;
}
.hour {
  height: 21px;
  border-bottom-width: 2px;
}
.half {
  height: 19px;
}
.last {
  height: 20px;
}
.date-row {
  display: flex;
  align-items: center;
  height: 38px;
  padding: 0 6px 0 10px;
  border-bottom: 1px solid #383838;
  font-size: 13px;
}
.date-row .badge {
  margin-left: 10px;
}
.date-row svg {
  margin-left: auto;
  stroke-width: 2.500;
}
.desktop-edge {
  flex: none;
  display: flex;
  height: 3px;
  padding-left: 48px;
  background: #222;
}
.desktop-edge span {
  width: 288px;
  background: #f4f4f4;
}
.desktop-edge i {
  width: 48px;
  margin-left: 247px;
  background: #484848;
}
</style>
